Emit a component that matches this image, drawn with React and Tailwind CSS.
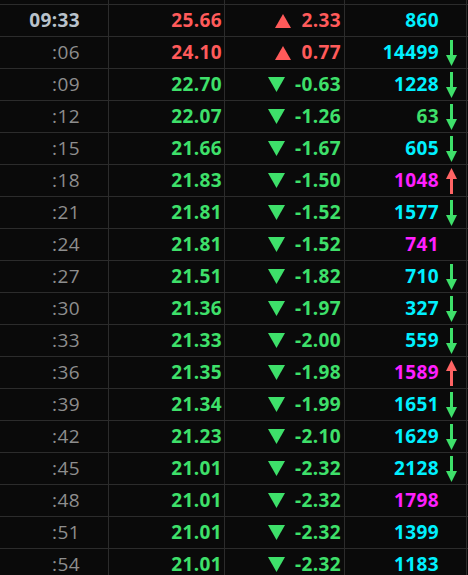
import React from "react";

const RED = "#ff5a5a";
const GREEN = "#3ee06a";
const CYAN = "#00f0ff";
const MAGENTA = "#ff1fff";

// [time, price, change, volume, volColor, arrow]
const ROWS = [
  ["09:33", "25.66", "2.33", "860", CYAN, null],
  [":06", "24.10", "0.77", "14499", CYAN, "down"],
  [":09", "22.70", "-0.63", "1228", CYAN, "down"],
  [":12", "22.07", "-1.26", "63", GREEN, "down"],
  [":15", "21.66", "-1.67", "605", CYAN, "down"],
  [":18", "21.83", "-1.50", "1048", MAGENTA, "up"],
  [":21", "21.81", "-1.52", "1577", CYAN, "down"],
  [":24", "21.81", "-1.52", "741", MAGENTA, null],
  [":27", "21.51", "-1.82", "710", CYAN, "down"],
  [":30", "21.36", "-1.97", "327", CYAN, "down"],
  [":33", "21.33", "-2.00", "559", CYAN, "down"],
  [":36", "21.35", "-1.98", "1589", MAGENTA, "up"],
  [":39", "21.34", "-1.99", "1651", CYAN, "down"],
  [":42", "21.23", "-2.10", "1629", CYAN, "down"],
  [":45", "21.01", "-2.32", "2128", CYAN, "down"],
  [":48", "21.01", "-2.32", "1798", MAGENTA, null],
  [":51", "21.01", "-2.32", "1399", CYAN, null],
  [":54", "21.01", "-2.32", "1183", CYAN, null],
];

function Tri({ up }) {
  return up ? (
    <svg width="16" height="14" viewBox="0 0 16 14" className="shrink-0">
      <polygon points="8,0 16,14 0,14" fill={RED} />
    </svg>
  ) : (
    <svg width="17" height="15" viewBox="0 0 17 15" className="shrink-0">
      <polygon points="0,0 17,0 8.5,15" fill={GREEN} />
    </svg>
  );
}

function Arrow({ dir }) {
  if (!dir) return <span className="w-[11px] shrink-0" />;
  const color = dir === "up" ? "#ff6464" : GREEN;
  return (
    <svg width="11" height="26" viewBox="0 0 11 26" className="shrink-0">
      {dir === "down" ? (
        <>
          <rect x="4" y="0" width="3" height="17" fill={color} />
          <polygon points="0,15 11,15 5.5,26" fill={color} />
        </>
      ) : (
        <>
          <rect x="4" y="9" width="3" height="17" fill={color} />
          <polygon points="0,11 11,11 5.5,0" fill={color} />
        </>
      )}
    </svg>
  );
}

function Cells({ children }) {
  return <div className="flex h-full">{children}</div>;
}

export default function App() {
  return (
    <div
      className="w-[468px] h-[575px] overflow-hidden bg-[#0a0a0a] text-[19px] tracking-[0.4px]"
      style={{ fontFamily: '"Open Sans", "Noto Sans", sans-serif' }}
    >
      {/* sliver of the row above */}
      <div className="h-[4px]">
        <Cells>
          <div className="w-[109px] border-r border-[#2c2c2c]" />
          <div className="w-[116px] border-r border-[#2c2c2c]" />
          <div className="w-[120px] border-r border-[#2c2c2c]" />
          <div className="w-[122px] border-r border-[#2c2c2c]" />
        </Cells>
      </div>

      {ROWS.map(([time, price, change, vol, volColor, arrow], i) => {
        const up = i < 2;
        const tone = up ? RED : GREEN;
        return (
          <div key={i} className="h-[32px] border-t border-[#2c2c2c] flex">
            <div
              className={
                "w-[109px] border-r border-[#2c2c2c] flex items-center justify-end pr-[28px] " +
                (i === 0 ? "font-bold text-[#b9c2cb]" : "text-[#8e8e8e]")
              }
            >
              {time}
            </div>
            <div
              className="w-[116px] border-r border-[#2c2c2c] flex items-center justify-end pr-[2px] font-bold"
              style={{ color: tone }}
            >
              {price}
            </div>
            <div
              className="w-[120px] border-r border-[#2c2c2c] flex items-center justify-end gap-[10px] pr-[3px] font-bold"
              style={{ color: tone }}
            >
              <Tri up={up} />
              <span>{change}</span>
            </div>
            <div className="w-[122px] border-r border-[#2c2c2c] flex items-center justify-end gap-[7px] pr-[9px] font-bold">
              <span style={{ color: volColor }}>{vol}</span>
              <Arrow dir={arrow} />
            </div>
          </div>
        );
      })}
    </div>
  );
}
